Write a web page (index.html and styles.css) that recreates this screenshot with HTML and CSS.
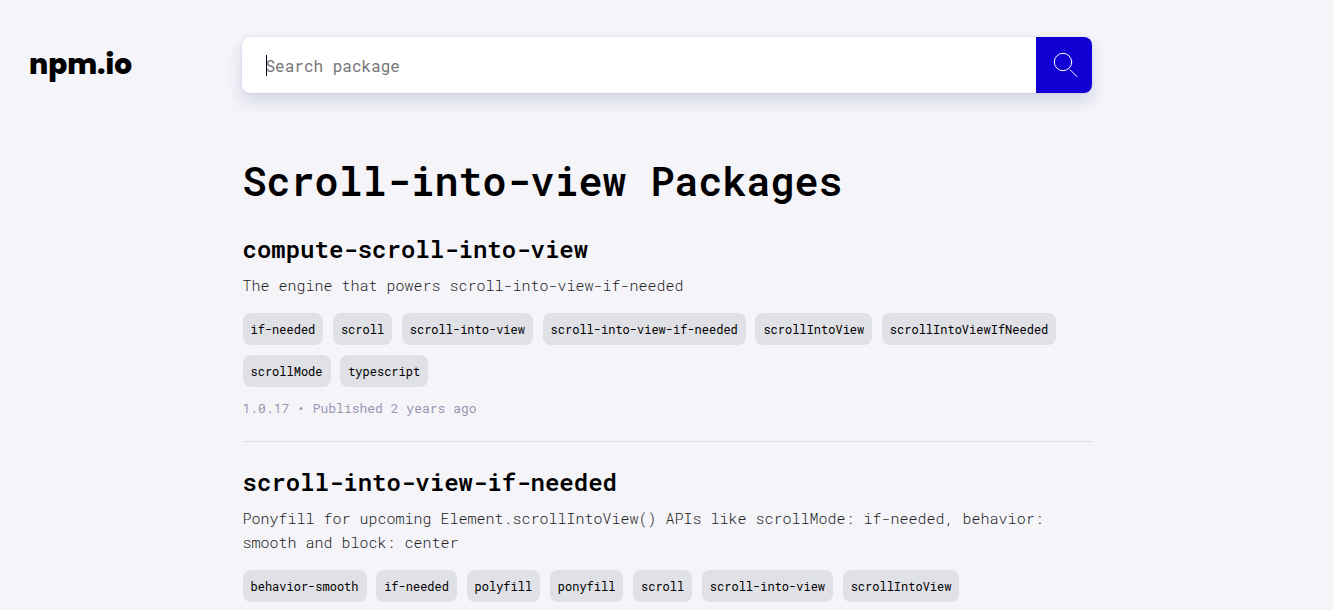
FILE: index.html
```html
<!DOCTYPE html>
<html lang="en">
<head>
<meta charset="utf-8">
<meta name="viewport" content="width=device-width, initial-scale=1">
<title>Scroll-into-view Packages | npm.io</title>
<link rel="stylesheet" href="styles.css">
</head>
<body>
<header class="header">
  <a class="logo" href="/">npm.io</a>
  <form class="search" role="search">
    <div class="search-field">
      <input class="search-input" type="text" placeholder="Search package" aria-label="Search package" autofocus>
      <span class="caret" aria-hidden="true"></span>
    </div>
    <button class="search-button" type="submit" aria-label="Search">
      <svg width="26" height="26" viewBox="0 0 26 26" fill="none" stroke="#fff" stroke-width="1" stroke-linecap="round" aria-hidden="true">
        <circle cx="10" cy="10" r="8.7"/>
        <path d="M17.2 17.8 24 24.6"/>
      </svg>
    </button>
  </form>
</header>
<main class="content">
  <h1 class="title">Scroll-into-view Packages</h1>
  <article class="package">
    <h2 class="name"><a href="#compute-scroll-into-view">compute-scroll-into-view</a></h2>
    <p class="description">The engine that powers scroll-into-view-if-needed</p>
    <div class="tags">
      <a class="tag" href="#if-needed">if-needed</a>
      <a class="tag" href="#scroll">scroll</a>
      <a class="tag" href="#scroll-into-view">scroll-into-view</a>
      <a class="tag" href="#scroll-into-view-if-needed">scroll-into-view-if-needed</a>
      <a class="tag" href="#scrollIntoView">scrollIntoView</a>
      <a class="tag" href="#scrollIntoViewIfNeeded">scrollIntoViewIfNeeded</a>
      <a class="tag" href="#scrollMode">scrollMode</a>
      <a class="tag" href="#typescript">typescript</a>
    </div>
    <p class="meta">1.0.17 • Published 2 years ago</p>
  </article>
  <article class="package">
    <h2 class="name"><a href="#package-if-needed">scroll-into-view-if-needed</a></h2>
    <p class="description">Ponyfill for upcoming Element.scrollIntoView() APIs like scrollMode: if-needed, behavior: smooth and block: center</p>
    <div class="tags">
      <a class="tag" href="#behavior-smooth">behavior-smooth</a>
      <a class="tag" href="#if-needed">if-needed</a>
      <a class="tag" href="#polyfill">polyfill</a>
      <a class="tag" href="#ponyfill">ponyfill</a>
      <a class="tag" href="#scroll">scroll</a>
      <a class="tag" href="#scroll-into-view">scroll-into-view</a>
      <a class="tag" href="#scrollIntoView">scrollIntoView</a>
    </div>
  </article>
</main>
</body>
</html>
```
FILE: styles.css
```css
* {
  box-sizing: border-box;
}

html {
  overflow-x: hidden;
  scrollbar-width: none;
}

body {
  margin: 0;
  background: #f4f4f9;
  color: #000;
  font-family: "Roboto Mono", "Liberation Mono", monospace;
  font-size: 16px;
}

a {
  color: inherit;
  text-decoration: none;
}

.header,
.content {
  display: grid;
  grid-template-columns: 1fr minmax(0, 850px) 1fr;
}

.header {
  align-items: center;
  padding-top: 37px;
}

.logo {
  padding-left: 29px;
  font-family: Poppins, "Open Sans", sans-serif;
  font-size: 28px;
  font-weight: 800;
  line-height: 40px;
}

.search {
  display: flex;
  height: 56px;
  border-radius: 8px;
  background: #fff;
  box-shadow: 0 8px 16px rgba(30, 50, 120, 0.16), 0 0 2px rgba(30, 50, 120, 0.14);
}

.search-field {
  position: relative;
  display: flex;
  flex: 1;
}

.search-input {
  width: 100%;
  padding: 0 24px;
  border: 0;
  border-radius: 8px 0 0 8px;
  outline: 0;
  background: transparent;
  font: inherit;
  caret-color: transparent;
}

.search-input::placeholder {
  color: #757575;
}

.caret {
  position: absolute;
  top: 18px;
  left: 24px;
  width: 1px;
  height: 21px;
  background: #000020;
}

.search-button {
  display: flex;
  align-items: center;
  justify-content: center;
  width: 56px;
  padding: 0 0 0 4px;
  border: 0;
  border-radius: 0 8px 8px 0;
  background: #1000d4;
}

.content {
  padding-left: 2px;
}

.content > * {
  grid-column: 2;
}

.title {
  margin: 60px 0 0;
  font-size: 40px;
  font-weight: 600;
  line-height: 56px;
}

.package {
  padding: 24px 0 23px;
  border-bottom: 1px solid #e0e1e6;
}

.name {
  margin: 0;
  font-size: 24px;
  font-weight: 600;
  line-height: 32px;
}

.description {
  margin: 8px 0 10px;
  color: #222;
  font-size: 15px;
  font-weight: 300;
  line-height: 24px;
}

.tags {
  line-height: 42px;
}

.tag {
  display: inline-block;
  padding: 0 8px;
  border-radius: 8px;
  background: #e0e1e6;
  font-size: 12px;
  line-height: 32px;
}

.meta {
  margin: 7px 0 0;
  color: #9a97b3;
  font-size: 13px;
  line-height: 20px;
}
```
